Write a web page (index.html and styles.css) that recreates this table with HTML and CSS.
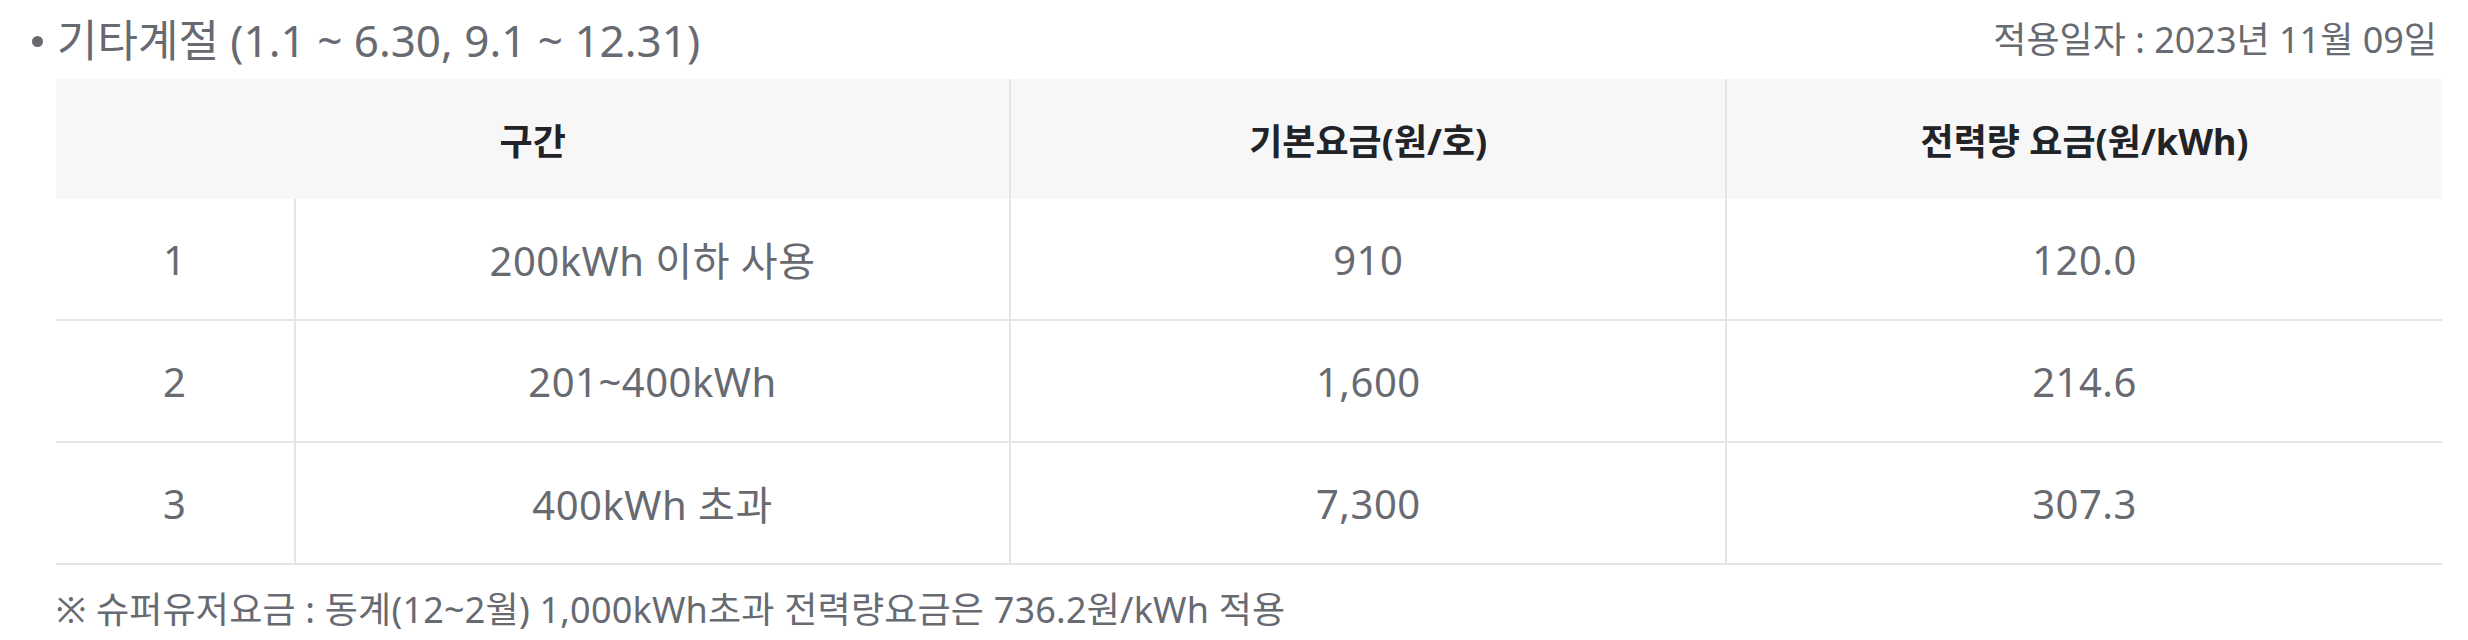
FILE: index.html
```html
<!DOCTYPE html>
<html lang="ko">
<head>
<meta charset="utf-8">
<title>기타계절 요금표</title>
<link rel="stylesheet" href="styles.css">
</head>
<body>
<div class="page">
  <div class="head">
    <h3 class="title"><span class="dot"></span>기타계절 (1.1 ~ 6.30, 9.1 ~ 12.31)</h3>
    <p class="date">적용일자 : 2023년 11월 09일</p>
  </div>
  <div class="body">
    <table class="rate">
      <colgroup>
        <col class="c1"><col class="c2"><col class="c3"><col class="c4">
      </colgroup>
      <thead>
        <tr>
          <th colspan="2">구간</th>
          <th class="sep">기본요금(원/호)</th>
          <th class="sep">전력량 요금(원/kWh)</th>
        </tr>
      </thead>
      <tbody>
        <tr><td>1</td><td class="sep">200kWh 이하 사용</td><td class="sep">910</td><td class="sep">120.0</td></tr>
        <tr><td>2</td><td class="sep">201~400kWh</td><td class="sep">1,600</td><td class="sep">214.6</td></tr>
        <tr><td>3</td><td class="sep">400kWh 초과</td><td class="sep">7,300</td><td class="sep">307.3</td></tr>
      </tbody>
    </table>
    <p class="note">※ 슈퍼유저요금 : 동계(12~2월) 1,000kWh초과 전력량요금은 736.2원/kWh 적용</p>
  </div>
</div>
</body>
</html>
```

FILE: styles.css
```css
html, body {
  margin: 0;
  padding: 0;
  background: #ffffff;
}
body {
  font-family: "Noto Sans", "Noto Sans CJK KR", sans-serif;
  color: #676a71;
}
.page {
  padding: 0 26px 0 26px;
}
.head {
  display: flex;
  justify-content: space-between;
  align-items: center;
  height: 79px;
}
.title {
  margin: 0;
  font-size: 44px;
  font-weight: 400;
  line-height: 1;
  display: flex;
  align-items: center;
  color: #676a71;
}
.dot {
  display: inline-block;
  width: 11px;
  height: 11px;
  border-radius: 50%;
  background: #676a71;
  margin: 4px 14px 0 6px;
}
.date {
  margin: 0;
  font-size: 36px;
  line-height: 1;
  color: #676a71;
  padding-right: 5px;
}
.body {
  padding-left: 30px;
}
.rate {
  width: 100%;
  border-collapse: collapse;
  table-layout: fixed;
}
.c1 { width: 10%; }
.c2 { width: 30%; }
.c3 { width: 30%; }
.c4 { width: 30%; }
.rate th {
  height: 120px;
  padding: 0;
  background: #f7f7f7;
  color: #222327;
  font-size: 36px;
  font-weight: 700;
  text-align: center;
  vertical-align: middle;
}
.rate td {
  height: 120px;
  padding: 0;
  font-size: 40px;
  letter-spacing: 0.5px;
  text-align: center;
  vertical-align: middle;
  border-bottom: 2px solid #e3e5e9;
  color: #676a71;
}
.rate .sep {
  border-left: 2px solid #e3e5e9;
}
.note {
  margin: 0;
  height: 84px;
  display: flex;
  align-items: center;
  font-size: 36px;
  letter-spacing: 0.2px;
  color: #676a71;
}
```
